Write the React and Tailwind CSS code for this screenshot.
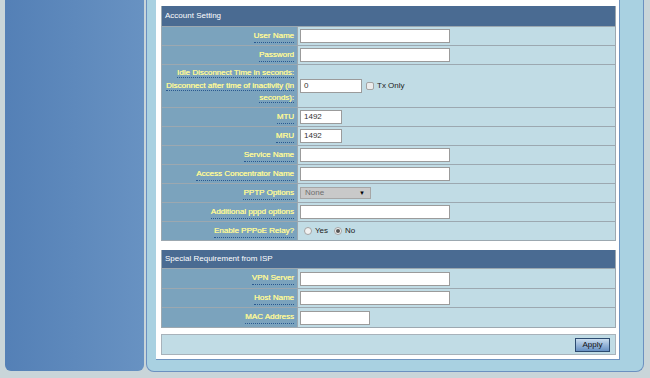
import React from "react";

const Label = ({ children }) => (
  <span className="border-b border-dotted border-[#2a5990] text-[#fcf99c] [text-shadow:0.3px_0_0_#f3ef8c]">{children}</span>
);

const TextInput = ({ w = "w-[150px]", value = "" }) => (
  <div className={`${w} h-[14px] bg-white border border-[#9b9b9b] text-[8px] leading-[12px] px-[3px] text-[#333]`}>
    {value}
  </div>
);

const Radio = ({ checked }) => (
  <span className="inline-flex w-[8px] h-[8px] rounded-full border border-[#a3a3a3] bg-[#f2f2f2] items-center justify-center">
    {checked && <span className="w-[4px] h-[4px] rounded-full bg-[#555]" />}
  </span>
);

const Row = ({ label, h = "h-[19px]", children }) => (
  <div className={`flex ${h} border-b border-[#9ca8b0]`}>
    <div className="w-[136px] shrink-0 bg-[#7ba3bd] flex items-center justify-end pr-[3px] text-right border-r border-[#9ca8b0]">
      {label}
    </div>
    <div className="flex-1 bg-[#c1dce5] flex items-center pl-[2px]">{children}</div>
  </div>
);

const Header = ({ title, h }) => (
  <div className={`${h} bg-[#4a6b92] text-white text-[8px] flex items-center pl-[3px] border-b border-[#9ca8b0]`}>
    {title}
  </div>
);

export default function App() {
  return (
    <div className="w-[650px] h-[378px] bg-[#c9d5d9] flex pl-[5px] overflow-hidden font-['Liberation_Sans',Arial,sans-serif] text-[8px]">
      <div className="w-[139px] h-[371px] shrink-0 rounded-b-[6px] bg-gradient-to-r from-[#5480b6] to-[#6892c2]" />
      <div className="ml-[2px] w-[498px] h-[372px] shrink-0 bg-[#a9d1e1] border-x border-b border-[#6b90c0] rounded-b-[8px] pl-[9px]">
        <div className="w-[464px] bg-white pt-[6px] pl-[5px] pr-[4px] pb-[4px] border-r border-b border-[#6f94c0]">
          <div className="w-[455px] border-x border-[#9ca8b0]">
            <Header title="Account Setting" h="h-[21px]" />
            <Row label={<Label>User Name</Label>}>
              <TextInput />
            </Row>
            <Row label={<Label>Password</Label>}>
              <TextInput />
            </Row>
            <Row
              h="h-[43px]"
              label={
                <div className="leading-[12.5px] whitespace-nowrap">
                  <Label>Idle Disconnect Time in seconds:</Label>
                  <br />
                  <Label>Disconnect after time of inactivity (in</Label>
                  <br />
                  <Label>seconds):</Label>
                </div>
              }
            >
              <TextInput w="w-[62px]" value="0" />
              <span className="ml-[4px] w-[8px] h-[8px] rounded-[2px] border border-[#a3a3a3] bg-[#ececec]" />
              <span className="ml-[3px] text-[#222]">Tx Only</span>
            </Row>
            <Row label={<Label>MTU</Label>}>
              <TextInput w="w-[42px]" value="1492" />
            </Row>
            <Row label={<Label>MRU</Label>}>
              <TextInput w="w-[42px]" value="1492" />
            </Row>
            <Row label={<Label>Service Name</Label>}>
              <TextInput />
            </Row>
            <Row label={<Label>Access Concentrator Name</Label>}>
              <TextInput />
            </Row>
            <Row label={<Label>PPTP Options</Label>}>
              <div className="w-[71px] h-[12px] bg-[#c9c9c9] border border-[#a6a6a6] flex items-center justify-between pl-[4px] pr-[5px] text-[#6e6e6e]">
                <span>None</span>
                <span className="text-[6px] text-black">▼</span>
              </div>
            </Row>
            <Row label={<Label>Additional pppd options</Label>}>
              <TextInput />
            </Row>
            <Row label={<Label>Enable PPPoE Relay?</Label>}>
              <div className="flex items-center pl-[4px] text-[#222]">
                <Radio />
                <span className="ml-[3px]">Yes</span>
                <span className="ml-[6px]"><Radio checked /></span>
                <span className="ml-[3px]">No</span>
              </div>
            </Row>
          </div>

          <div className="h-[9px]" />

          <div className="w-[455px] border-x border-[#9ca8b0]">
            <Header title="Special Requirement from ISP" h="h-[19px]" />
            <Row h="h-[20px]" label={<Label>VPN Server</Label>}>
              <TextInput />
            </Row>
            <Row label={<Label>Host Name</Label>}>
              <TextInput />
            </Row>
            <Row h="h-[20px]" label={<Label>MAC Address</Label>}>
              <TextInput w="w-[70px]" />
            </Row>
          </div>

          <div className="h-[6px]" />

          <div className="w-[455px] h-[21px] bg-[#c1dce5] border border-[#a8b2ba] flex items-center justify-end pr-[5px]">
            <div className="w-[35px] h-[14px] border border-[#2c4b70] bg-gradient-to-b from-[#c9dcee] to-[#6790c2] text-[8px] text-[#111] flex items-center justify-center">
              Apply
            </div>
          </div>
        </div>
      </div>
    </div>
  );
}
